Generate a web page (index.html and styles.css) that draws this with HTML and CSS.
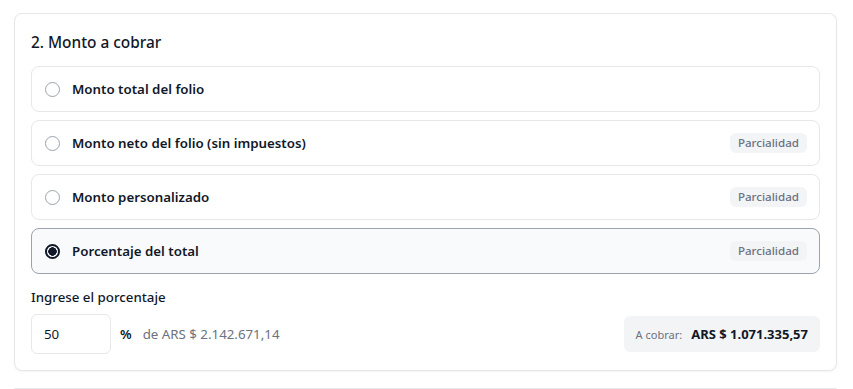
FILE: index.html
```html
<!DOCTYPE html>
<html lang="es">
<head>
    <meta charset="UTF-8">
    <meta name="viewport" content="width=device-width, initial-scale=1.0">
    <title>Monto a cobrar</title>
    <link rel="stylesheet" href="styles.css">
</head>
<body>
    <section class="card">
        <h2 class="card-title">2. Monto a cobrar</h2>

        <div class="options">
            <label class="option">
                <span class="radio"></span>
                <span class="option-label">Monto total del folio</span>
            </label>
            <label class="option">
                <span class="radio"></span>
                <span class="option-label">Monto neto del folio (sin impuestos)</span>
                <span class="badge">Parcialidad</span>
            </label>
            <label class="option">
                <span class="radio"></span>
                <span class="option-label">Monto personalizado</span>
                <span class="badge">Parcialidad</span>
            </label>
            <label class="option selected">
                <span class="radio checked"></span>
                <span class="option-label">Porcentaje del total</span>
                <span class="badge">Parcialidad</span>
            </label>
        </div>

        <div class="percent-block">
            <div class="field-label">Ingrese el porcentaje</div>
            <div class="percent-row">
                <input type="text" class="percent-input" value="50">
                <span class="percent-sign">%</span>
                <span class="percent-of">de ARS $ 2.142.671,14</span>
                <div class="total-box">
                    <span class="total-label">A cobrar:</span>
                    <span class="total-value">ARS $ 1.071.335,57</span>
                </div>
            </div>
        </div>
    </section>

    <section class="card next-card"></section>
</body>
</html>
```

FILE: styles.css
```css
* {
    margin: 0;
    padding: 0;
    box-sizing: border-box;
    font-family: 'Noto Sans', 'Open Sans', sans-serif;
}

body {
    background-color: #ffffff;
    padding: 13px 16px 0 14px;
    color: #111827;
    height: 389px;
    overflow: hidden;
}

.card {
    background-color: white;
    border: 1px solid #e5e7eb;
    border-radius: 8px;
    box-shadow: 0 1px 2px rgba(0, 0, 0, 0.05);
    padding: 19px 16px 16px 16px;
}

.card-title {
    font-size: 15.4px;
    font-weight: 500;
    line-height: 20px;
    margin-bottom: 13px;
}

.options {
    display: flex;
    flex-direction: column;
    gap: 8px;
}

.option {
    display: flex;
    align-items: center;
    height: 46px;
    padding: 0 12px 0 13px;
    border: 1px solid #e5e7eb;
    border-radius: 8px;
    cursor: pointer;
}

.option.selected {
    background-color: #f9fafb;
    border-color: #9ca3af;
}

.radio {
    width: 15px;
    height: 15px;
    border: 1px solid #9ca3af;
    border-radius: 50%;
    margin-right: 12px;
    flex-shrink: 0;
    background-color: white;
}

.radio.checked {
    border: 2px solid #111827;
    background: radial-gradient(circle, #111827 0 4px, white 4.5px);
}

.option-label {
    font-size: 13.3px;
    font-weight: 600;
    flex: 1;
}

.badge {
    background-color: #f3f4f6;
    color: #6b7280;
    font-size: 11.6px;
    font-weight: 500;
    padding: 2px 8px;
    border-radius: 6px;
    line-height: 16px;
}

.percent-block {
    margin-top: 13px;
}

.field-label {
    font-size: 13.3px;
    font-weight: 500;
    line-height: 20px;
    margin-bottom: 7px;
}

.percent-row {
    display: flex;
    align-items: center;
}

.percent-input {
    width: 80px;
    height: 40px;
    border: 1px solid #e5e7eb;
    border-radius: 6px;
    padding: 0 12px;
    font-size: 13.3px;
    color: #111827;
}

.percent-sign {
    font-size: 13.3px;
    font-weight: 600;
    margin-left: 9px;
}

.percent-of {
    font-size: 13.3px;
    color: #6b7280;
    margin-left: 11px;
}

.total-box {
    margin-left: auto;
    background-color: #f3f4f6;
    border-radius: 6px;
    padding: 0 12px;
    height: 36px;
    display: flex;
    align-items: center;
    gap: 9px;
}

.total-label {
    font-size: 11px;
    color: #6b7280;
}

.total-value {
    font-size: 13px;
    font-weight: 700;
}

.next-card {
    margin-top: 17px;
    height: 2px;
    padding: 0;
}
```
